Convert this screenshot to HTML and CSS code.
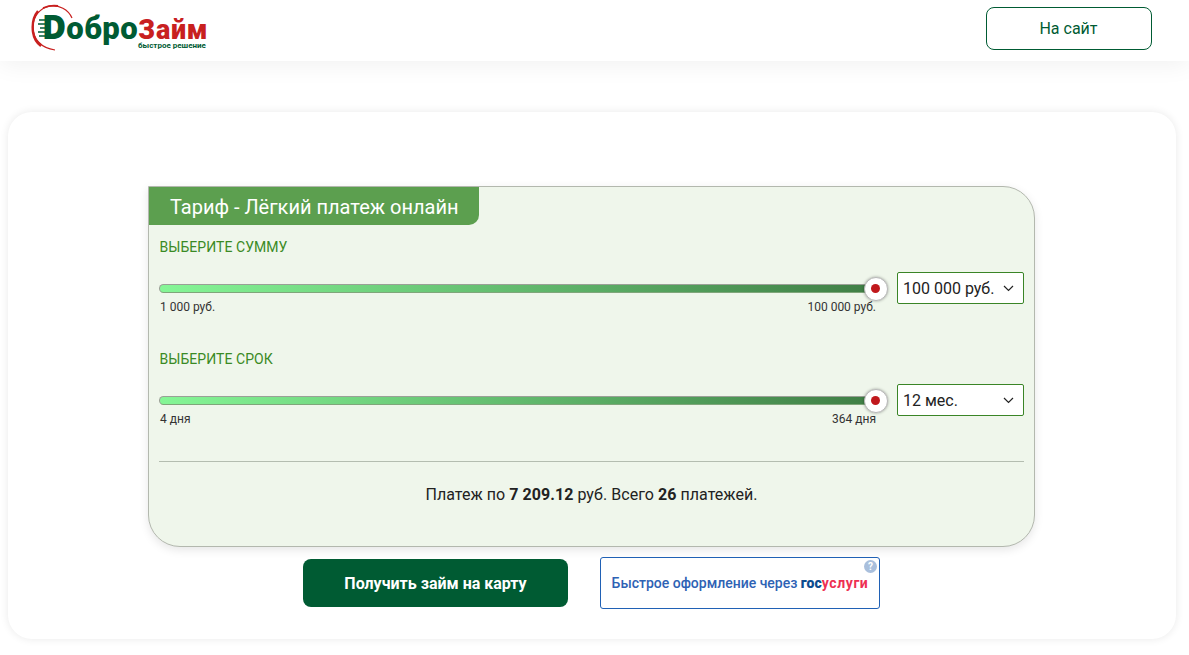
FILE: index.html
```html
<!DOCTYPE html>
<html>
<head>
    <title>ДоброЗайм</title>
    <link rel="stylesheet" href="styles.css">
</head>
<body>
    <header class="top-bar">
        <a class="logo">
            <svg class="logo-ring" width="46" height="50" viewBox="0 0 46 50">
                <!-- thin ring round the D -->
                <path d="M41 14 C37 5 28 1 19 2 C9 4 2 12 2 23 C2 35 10 44 24 46" fill="none" stroke="#c8201f" stroke-width="1.2"/>
                <path d="M7 7 C2 13 1 20 2 28 C3 35 6 39 10 42" fill="none" stroke="#c8201f" stroke-width="2.4"/>
                <path d="M12 4 C17 2 22 1 27 2" fill="none" stroke="#c8201f" stroke-width="1.8"/>
                <!-- speed lines on the left of the D -->
                <path d="M8 16h7M7 20h8M9 24h6M7 28h8M8 32h7" fill="none" stroke="#005b33" stroke-width="1.4"/>
            </svg>
            <span class="logo-main"><span class="logo-d">D</span><span class="logo-green">обро</span><span class="logo-red">Займ</span></span>
            <span class="logo-sub">быстрое решение</span>
        </a>
        <button class="site-btn">На сайт</button>
    </header>

    <main class="card">
        <section class="calc">
            <div class="calc-title">Тариф - Лёгкий платеж онлайн</div>
            <div class="calc-body">
                <div class="field">
                    <div class="field-label">ВЫБЕРИТЕ СУММУ</div>
                    <div class="field-row">
                        <div class="slider">
                            <div class="track"><span class="thumb"></span></div>
                            <div class="limits"><span>1 000 руб.</span><span>100 000 руб.</span></div>
                        </div>
                        <div class="select">
                            <span>100 000 руб.</span>
                            <svg width="11" height="7" viewBox="0 0 11 7"><path d="M1 1l4.5 4.5L10 1" fill="none" stroke="#222" stroke-width="1.2"/></svg>
                        </div>
                    </div>
                </div>
                <div class="field">
                    <div class="field-label">ВЫБЕРИТЕ СРОК</div>
                    <div class="field-row">
                        <div class="slider">
                            <div class="track"><span class="thumb"></span></div>
                            <div class="limits"><span>4 дня</span><span>364 дня</span></div>
                        </div>
                        <div class="select">
                            <span>12 мес.</span>
                            <svg width="11" height="7" viewBox="0 0 11 7"><path d="M1 1l4.5 4.5L10 1" fill="none" stroke="#222" stroke-width="1.2"/></svg>
                        </div>
                    </div>
                </div>
                <div class="summary">Платеж по <b>7 209.12</b> руб. Всего <b>26</b> платежей.</div>
            </div>
        </section>
        <div class="actions">
            <button class="get-btn">Получить займ на карту</button>
            <button class="gos-btn">
                Быстрое оформление через&nbsp;<b class="gos-blue">гос</b><b class="gos-red">услуги</b>
                <span class="gos-help">?</span>
            </button>
        </div>
    </main>
</body>
</html>
```

FILE: styles.css
```css
* { box-sizing: border-box; }
body { margin: 0; font-family: Roboto, Arial, sans-serif; background: #fff; color: #222; height: 655px; overflow: hidden; }
button { font-family: inherit; cursor: pointer; }

.top-bar { height: 61px; background: #fff; display: flex; justify-content: space-between; padding: 7px 37px 0 30px; box-shadow: 0 4px 24px rgba(0,0,0,0.06); }
.logo { position: relative; display: block; width: 180px; height: 48px; margin-top: -3px; }
.logo-ring { position: absolute; left: 1px; top: 0; }
.logo-main { position: absolute; left: 12px; top: 10px; font-family: Roboto, sans-serif; font-weight: 900; line-height: 26px; white-space: nowrap; }
.logo-d { color: #005b33; font-family: "Open Sans", sans-serif; font-size: 33px; font-weight: 800; }
.logo-green { color: #005b33; font-size: 31px; letter-spacing: 0.5px; }
.logo-red { color: #c8201f; font-size: 27px; letter-spacing: 0.7px; }
.logo-sub { position: absolute; left: 108px; top: 38px; font-size: 8px; line-height: 8px; font-weight: 700; color: #005b33; white-space: nowrap; }
.site-btn { width: 166px; height: 43px; padding: 0 1px 0 0; background: #fff; border: 1px solid #005b33; border-radius: 8px; color: #005b33; font-size: 16px; }

.card { width: 1168px; height: 527px; margin: 51px 0 0 8px; padding-top: 74px; background: #fff; border-radius: 24px; box-shadow: 0 0 8px rgba(0,0,0,0.09); }
.calc { width: 887px; height: 361px; margin-left: 140px; background: #eff6eb; border: 1px solid #b3b8ae; border-radius: 0 32px 32px 32px; box-shadow: 0 3px 10px rgba(0,0,0,0.1); overflow: hidden; }
.calc-title { width: 330px; height: 38px; padding-left: 21px; background: #5c9f4f; border-radius: 0 0 10px 0; color: #fff; font-size: 20px; line-height: 40px; }
.calc-body { padding: 0 10px; }
.field { height: 112px; padding-top: 14px; }
.field-label { color: #3a8a24; font-size: 14px; line-height: 17px; padding-left: 0.5px; letter-spacing: 0.05px; }
.field-row { display: flex; justify-content: space-between; margin-top: 16px; }
.slider { width: 717px; padding-top: 12px; }
.track { position: relative; height: 9px; border-radius: 5px; border: 1px solid #9aa096; border-bottom-color: #7fa67a; background: linear-gradient(to right, #85f696, #3f7e45); }
.thumb { position: absolute; right: -13px; top: -8px; width: 24px; height: 24px; border-radius: 50%; background: #fff; border: 1px solid #b9b9b9; box-shadow: 0 0 3px rgba(0,0,0,0.35); }
.thumb::after { content: ""; position: absolute; left: 6px; top: 6px; width: 9px; height: 9px; border-radius: 50%; background: #c0181c; }
.limits { display: flex; justify-content: space-between; padding: 0 0 0 1px; margin-top: 7px; font-size: 12px; line-height: 14px; color: #333; }
.select { width: 127px; height: 32px; display: flex; align-items: center; justify-content: space-between; padding: 0 9px 0 5px; background: #fff; border: 1px solid #3a8526; border-radius: 2px; font-size: 16px; }
.summary { margin-top: 12px; padding-top: 23px; border-top: 1px solid #b4bdb0; text-align: center; font-size: 16px; line-height: 19px; letter-spacing: 0.05px; }

.actions { display: flex; align-items: center; margin: 10px 0 0 295px; gap: 32px; }
.get-btn { width: 265px; height: 48px; background: #005b33; border: none; border-radius: 8px; color: #fff; font-size: 16px; font-weight: 700; }
.gos-btn { position: relative; display: flex; align-items: center; justify-content: center; width: 280px; height: 52px; padding: 0; background: #fff; border: 1px solid #2061b5; border-radius: 3px; color: #2e62b4; font-size: 14px; font-weight: 500; white-space: nowrap; }
.gos-blue { color: #0d4c8f; font-weight: 900; }
.gos-red { color: #ee2f53; font-weight: 700; letter-spacing: 0.6px; }
.gos-help { position: absolute; right: 2px; top: 2px; width: 13px; height: 13px; border-radius: 50%; background: #a9bfdc; color: #fff; font-size: 10px; font-weight: 700; line-height: 13px; text-align: center; }
```
